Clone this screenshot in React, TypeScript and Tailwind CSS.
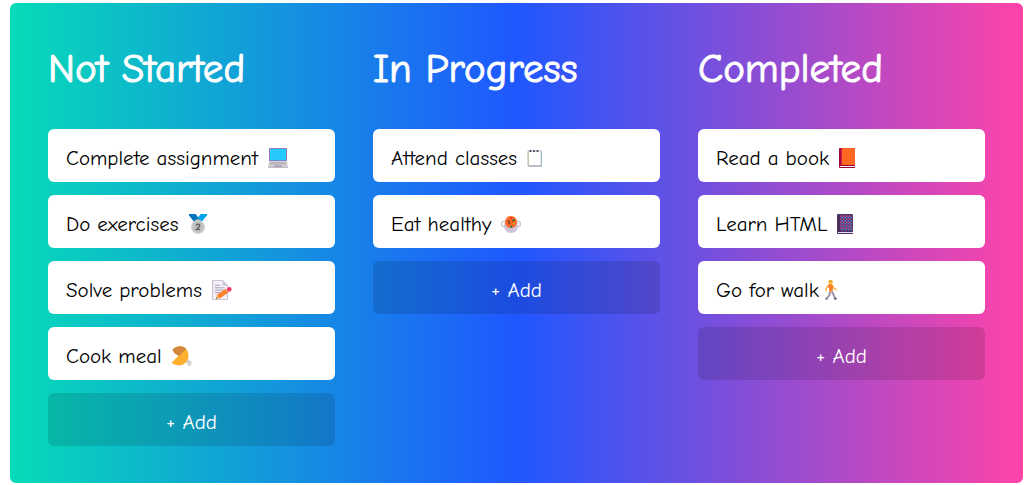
import type { ReactNode } from "react";

type Task = { title: string; icon: ReactNode };
type Column = { name: string; tasks: Task[] };

function Icon({ children }: { children: ReactNode }) {
  return (
    <svg viewBox="0 0 20 20" className="size-5 shrink-0" aria-hidden="true">
      {children}
    </svg>
  );
}

const laptop = (
  <Icon>
    <rect x="1" y="0" width="18" height="13" rx="0.6" fill="#998eA4" />
    <rect x="1.5" y="0.5" width="17" height="12.3" fill="#8d65c5" />
    <rect x="2" y="1" width="16" height="11.3" fill="#26c9fc" />
    <path d="M1 13h18l1 6.2q0 .8-.8.8H.8q-.8 0-.8-.8z" fill="#d3d3d3" />
    <path d="M2.2 14h15.6l.5 2.4H1.7z" fill="#b4acbc" />
    <path d="M2 15.1h16" stroke="#d3d3d3" strokeWidth="0.5" />
    <path d="M6.5 17.5h7l.4 1.3H6.1z" fill="#998ea4" />
    <path d="M0 19.3h20" stroke="#b4acbc" strokeWidth="0.8" />
  </Icon>
);

const medal = (
  <Icon>
    <path d="M1 0h6.5l4 5-3.8 3.6H6.6L1 1.6z" fill="#0074ba" />
    <path d="M12.6 0H19v1.3L13.2 8.6H8.6L8 6.6z" fill="#00a6ed" />
    <rect x="7.5" y="5.2" width="5" height="2.5" rx="0.8" fill="#9b9b9b" />
    <circle cx="10" cy="13" r="7" fill="#d3d3d3" />
    <circle cx="10" cy="13" r="5.7" fill="#bebebe" />
    <path
      d="M8.3 11.6q.2-1.5 1.8-1.5 1.6 0 1.6 1.4 0 .9-1 1.7l-2.2 2.2h3.4"
      fill="none"
      stroke="#5b5b5b"
      strokeWidth="1.2"
    />
  </Icon>
);

const memo = (
  <Icon>
    <path d="M1 0h10l5 5v14q0 1-1 1H1q-1 0-1-1V1q0-1 1-1z" fill="#cdc4d6" />
    <path d="M1.3 1h9.2L15 5.4V19H1z" fill="#f3eef8" />
    <path d="M10.5.8v4.7H15z" fill="#cdc4d6" />
    <path d="M3 5.3h5M3 7.8h9.5M3 10.2h9.5M3 12.6h7" stroke="#998ea4" strokeWidth="0.8" />
    <path d="m4 19 .9-4.2 2.8 3.1z" fill="#f3ad61" />
    <path d="m4 19 .4-1.7 1 1.2z" fill="#7d4533" />
    <path d="m5 14.8 8.8-6 2.8 3.8-8.9 5.8z" fill="#ff822d" />
    <path d="m13.7 8.9 1.5-1 2.7 3.8-1.4 1z" fill="#d3d3d3" />
    <circle cx="17.3" cy="9.3" r="2.2" fill="#f92f60" />
  </Icon>
);

const drumstick = (
  <Icon>
    <path d="m15 13 4.8 2.5-.6 3.8-2.7.6-3.2-5z" fill="#d3d3d3" />
    <path d="M1 2.7Q5 .1 9 .3q6 .7 7.4 7.4.8 6-3.8 10-4.9 3.3-11.7.3-1.6-1.2-.1-2.5l5.7-5.7z" fill="#ffb02e" />
    <path d="M.5 3.2Q5.2-.6 9.9.4q2.6.5 4.3 2.3L7 10.1Q.7 7 .5 3.2z" fill="#d3883e" />
  </Icon>
);

const notepad = (
  <svg viewBox="0 0 15 20" className="h-5 w-4 shrink-0" aria-hidden="true">
    <path d="M.7 3h13v15H.7z" fill="#fff" stroke="#b3abc2" strokeWidth="0.9" />
    <path d="M.6 3.2v14.5" stroke="#c9bd79" strokeWidth="0.7" />
    <path d="M14 4v14" stroke="#82bdc1" strokeWidth="0.8" />
    <path d="M1 18h13" stroke="#9899a1" strokeWidth="0.9" />
    <path d="M2.2 3h1.6M5.7 3h1.6M9.2 3h1.6" stroke="#10101f" strokeWidth="1.5" />
  </svg>
);

const bowl = (
  <Icon>
    <path d="M4 7.6Q.5 6.8.5 10q.2 3 4.4 3M16 7.6q3.5-.8 3.5 2.4-.2 3-4.4 3" fill="none" stroke="#cdc4d6" strokeWidth="1.3" />
    <path d="M3.2 9h13.6v3.5q-.4 6-6.8 6.5-6.4-.5-6.8-6.5z" fill="#cdc4d6" />
    <circle cx="10" cy="8" r="6" fill="#ff6723" />
    <path d="m6.5 6.6 2.4 1.6M7.5 10l1.4-1M11.3 7.3l1.5-1.2" stroke="#6d4534" strokeWidth="1.6" />
    <path d="m12.2 5.3 1.5.6M9 12.8h2.2" stroke="#008463" strokeWidth="1.4" />
    <circle cx="10.2" cy="4.2" r="1.1" fill="#f8312f" />
    <circle cx="13" cy="9.3" r="0.8" fill="#86d72f" />
  </Icon>
);

const book = (
  <svg viewBox="0 0 16 20" className="h-5 w-4 shrink-0" aria-hidden="true">
    <path d="M1 0h15v20H1q-1 0-1-1V1q0-1 1-1z" fill="#990838" />
    <path d="M1 18h15v1H1z" fill="#f3eef8" />
    <path d="M2.5 0H15q1 0 1 1v16H2.5z" fill="#ff6723" />
    <path d="M2 0v17.5" stroke="#ca0b4a" />
  </svg>
);

const notebook = (
  <svg viewBox="0 0 16 20" className="h-5 w-4 shrink-0" aria-hidden="true">
    <path d="M1 0h14q1 0 1 1v19H1q-1 0-1-1V1q0-1 1-1z" fill="#533566" />
    <path d="M1 18h15v1H1z" fill="#e1d8ec" />
    <path d="M2 0v17.5" stroke="#402a52" />
    <path d="M3 2.2h12M3 5.2h12M3 8.2h12M3 11.2h12M3 14.2h12" stroke="#d653a7" strokeWidth="1.3" strokeDasharray="1.4 1.6" />
    <path d="M4.5 3.6h11M4.5 6.6h11M4.5 9.6h11M4.5 12.6h11M4.5 15.6h11" stroke="#5092ff" strokeWidth="1.2" strokeDasharray="1.4 1.6" />
    <path d="M5 2.2h10M5 8.2h10M5 14.2h10" stroke="#a56953" strokeWidth="0.8" strokeDasharray=".8 2.2" />
  </svg>
);

const walker = (
  <svg viewBox="0 0 12 20" className="-ml-1 h-5 w-3 shrink-0" aria-hidden="true">
    <path d="m6.8 11.5 1.7 3 1.4 3.6M5.3 11.5l-1 3.7-2.5 3.3" fill="none" stroke="#998ea4" strokeWidth="1.9" strokeLinejoin="round" />
    <path d="m4.7 4.7-3 2.5-.8 3.5M7.3 5.2l1.4 2.6 2.5 1.8" fill="none" stroke="#ffb02e" strokeWidth="1.3" strokeLinecap="round" />
    <path d="M4 4h3.1l1 3-.4 4.5H4L4.1 8 2.7 7z" fill="#ff822d" />
    <circle cx="5.6" cy="2.3" r="2.1" fill="#ffc83d" />
    <path d="M3.5 2.2Q3.3 0 5.6 0q2.3 0 2 2.2z" fill="#e8a32b" />
    <path d="m.7 17.7 2 1.3-1 .8L.2 19zM9 18.4l1.8-.9 1 1.1-.5.8H9.2z" fill="#533566" />
  </svg>
);

const columns: Column[] = [
  {
    name: "Not Started",
    tasks: [
      { title: "Complete assignment", icon: laptop },
      { title: "Do exercises", icon: medal },
      { title: "Solve problems", icon: memo },
      { title: "Cook meal", icon: drumstick },
    ],
  },
  {
    name: "In Progress",
    tasks: [
      { title: "Attend classes", icon: notepad },
      { title: "Eat healthy", icon: bowl },
    ],
  },
  {
    name: "Completed",
    tasks: [
      { title: "Read a book", icon: book },
      { title: "Learn HTML", icon: notebook },
      { title: "Go for walk", icon: walker },
    ],
  },
];

export default function App() {
  return (
    <div className="bg-white pt-[3px] pr-[5px] pb-0.5 pl-2.5 font-['Comic_Sans_MS','Comic_Neue','Noto_Sans',sans-serif] text-[21px] leading-7 font-medium text-black">
      <main className="grid grid-cols-3 gap-[38px] rounded-md bg-[linear-gradient(90deg,#07dbb8_0%,#1f57ff_50%,#ff43a8_100%)] px-[38px] pt-[38px] pb-[37px]">
        {columns.map((column) => (
          <section key={column.name}>
            <h1 className="mb-8 text-[41px] leading-14 font-medium whitespace-nowrap text-white [-webkit-text-stroke:1px_white]">
              {column.name}
            </h1>
            <ul className="flex flex-col gap-[13px]">
              {column.tasks.map((task) => (
                <li key={task.title} className="flex h-[53px] items-center gap-2.5 rounded-md bg-white px-[18px] pt-1">
                  <span className="whitespace-nowrap">{task.title}</span>
                  {task.icon}
                </li>
              ))}
              <li>
                <button type="button" className="block h-[53px] w-full rounded-md bg-black/12 pt-1 text-center text-white">
                  + Add
                </button>
              </li>
            </ul>
          </section>
        ))}
      </main>
    </div>
  );
}
